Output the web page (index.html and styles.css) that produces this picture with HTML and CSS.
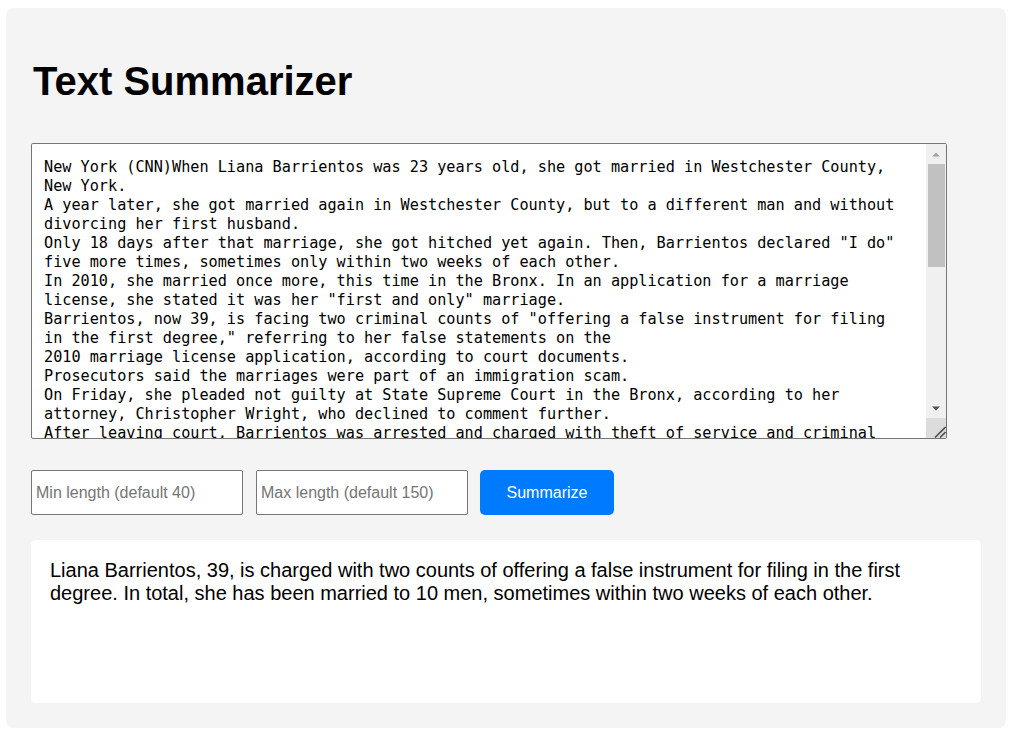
FILE: index.html
```html
<!DOCTYPE html>
<html lang="en">
<head>
<meta charset="utf-8">
<title>Text Summarizer</title>
<link rel="stylesheet" href="styles.css">
</head>
<body>
<div class="container">
  <h1 class="title">Text Summarizer</h1>
  <div class="editor">
  <textarea class="source" spellcheck="false">New York (CNN)When Liana Barrientos was 23 years old, she got married in Westchester County, New York.
A year later, she got married again in Westchester County, but to a different man and without divorcing her first husband.
Only 18 days after that marriage, she got hitched yet again. Then, Barrientos declared "I do" five more times, sometimes only within two weeks of each other.
In 2010, she married once more, this time in the Bronx. In an application for a marriage license, she stated it was her "first and only" marriage.
Barrientos, now 39, is facing two criminal counts of "offering a false instrument for filing in the first degree," referring to her false statements on the
2010 marriage license application, according to court documents.
Prosecutors said the marriages were part of an immigration scam.
On Friday, she pleaded not guilty at State Supreme Court in the Bronx, according to her attorney, Christopher Wright, who declined to comment further.
After leaving court, Barrientos was arrested and charged with theft of service and criminal trespass for allegedly sneaking into the New York subway through an emergency exit, said Detective
Annette Markowski, a police spokeswoman. In total, Barrientos has been married 10 times, with nine of her marriages occurring between 1999 and 2002.
All occurred either in Westchester County, Long Island, New Jersey or the Bronx. She is believed to still be married to four men, and at one time, she was married to eight men at once, prosecutors say.
Prosecutors said the immigration scam involved some of her husbands, who filed for permanent residence status shortly after the marriages.
Any divorces happened only after such filings were approved. It was unclear whether any of the men will be prosecuted.
The case was referred to the Bronx District Attorney's Office by Immigration and Customs Enforcement and the Department of Homeland Security's
Investigation Division. Seven of the men are from so-called "red-flag" countries, including Egypt, Turkey, Georgia, Pakistan and Mali.
Her eighth husband, Rashid Rajput, was deported in 2006 to his native Pakistan after an investigation by the Joint Terrorism Task Force.
If convicted, Barrientos faces up to four years in prison.  Her next court appearance is scheduled for May 18.</textarea>
    <div class="vscroll" aria-hidden="true">
      <span class="sb-btn">
        <svg width="8" height="5" viewBox="0 0 8 5"><polygon points="0,4.5 4,0.5 8,4.5" fill="#a3a3a3"/></svg>
      </span>
      <span class="sb-track"><span class="sb-thumb"></span></span>
      <span class="sb-btn">
        <svg width="8" height="5" viewBox="0 0 8 5"><polygon points="0,0.5 8,0.5 4,4.5" fill="#505050"/></svg>
      </span>
      <span class="sb-resizer">
        <svg width="20" height="20" viewBox="0 0 20 20"><path d="M9 19.5 L19.5 9 M14 19.5 L19.5 14" stroke="#505050" stroke-width="1.6" fill="none"/></svg>
      </span>
    </div>
  </div>
  <div class="controls">
    <input class="len-input" type="number" placeholder="Min length (default 40)">
    <input class="len-input" type="number" placeholder="Max length (default 150)">
    <button class="submit" type="button">Summarize</button>
  </div>
  <div class="output">Liana Barrientos, 39, is charged with two counts of offering a false instrument for filing in the first degree. In total, she has been married to 10 men, sometimes within two weeks of each other.</div>
</div>
</body>
</html>
```

FILE: styles.css
```css
html, body {
  margin: 0;
  padding: 0;
  background: #ffffff;
}

body {
  font-family: "Liberation Sans", Arial, sans-serif;
  color: #000;
}

.container {
  width: 1000px;
  height: 720px;
  box-sizing: border-box;
  margin: 8px auto 0;
  padding: 25px;
  background: #f4f4f4;
  border-radius: 8px;
}

.title {
  margin: 25px 0 39px 2px;
  font-size: 40px;
  font-weight: bold;
  line-height: 46px;
}

.editor {
  position: relative;
  width: 916px;
  height: 296px;
}

.source {
  display: block;
  width: 916px;
  height: 296px;
  box-sizing: border-box;
  margin: 0;
  padding: 14px 40px 12px 12px;
  border: 1px solid #767676;
  border-radius: 2px;
  background: #fff;
  color: #000;
  font-family: "DejaVu Sans Mono", "Liberation Mono", monospace;
  font-size: 15.2px;
  line-height: 19px;
  overflow: hidden;
  resize: none;
}

.vscroll {
  position: absolute;
  top: 1px;
  right: 1px;
  bottom: 1px;
  width: 20px;
  display: flex;
  flex-direction: column;
  background: #f0f0f0;
}

.sb-btn {
  display: flex;
  align-items: center;
  justify-content: center;
  height: 20px;
  flex: none;
}

.sb-btn svg {
  display: block;
}

.sb-track {
  flex: 1;
  display: flex;
  flex-direction: column;
}

.sb-thumb {
  display: block;
  height: 103px;
  margin: 0 1px 0 2px;
  background: #c1c1c1;
}

.sb-resizer {
  display: block;
  height: 20px;
  flex: none;
  background: #dcdcdc;
}

.sb-resizer svg {
  display: block;
}

.controls {
  display: flex;
  align-items: stretch;
  gap: 13px;
  margin-top: 31px;
  height: 45px;
}

.len-input {
  width: 212px;
  height: 45px;
  box-sizing: border-box;
  margin: 0;
  padding: 0 4px;
  border: 1px solid #767676;
  border-radius: 2px;
  background: #fff;
  font-family: "Liberation Sans", Arial, sans-serif;
  font-size: 16px;
  color: #000;
  -moz-appearance: textfield;
  appearance: textfield;
}

.len-input::-webkit-outer-spin-button,
.len-input::-webkit-inner-spin-button {
  -webkit-appearance: none;
  margin: 0;
}

.len-input::placeholder {
  color: #757575;
}

.submit {
  margin-left: -1px;
  width: 134px;
  height: 45px;
  padding: 0;
  border: none;
  border-radius: 5px;
  background: #007bff;
  color: #fff;
  font-family: "Liberation Sans", Arial, sans-serif;
  font-size: 16px;
}

.output {
  margin-top: 25px;
  height: 163px;
  box-sizing: border-box;
  padding: 19px 19px;
  background: #fff;
  border-radius: 5px;
  font-size: 20px;
  line-height: 23px;
}
```
